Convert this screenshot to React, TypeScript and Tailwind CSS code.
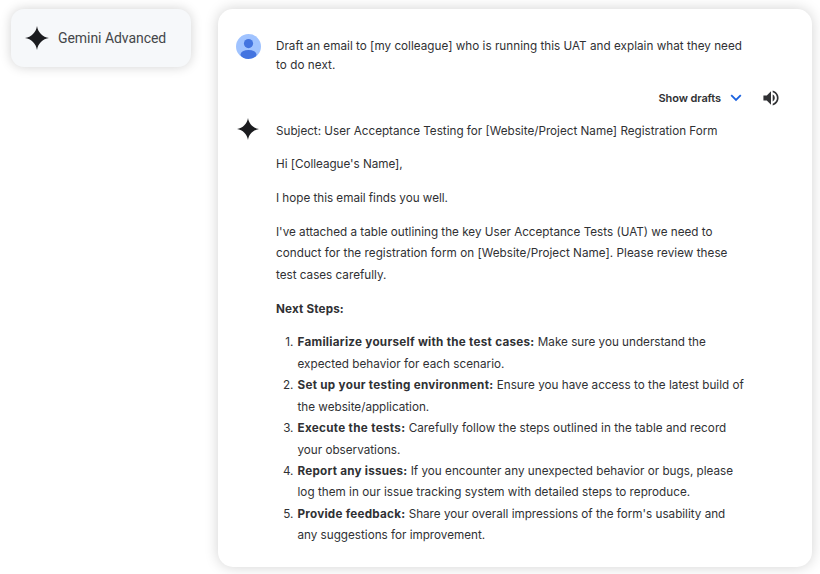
import type { ReactNode } from "react";

function Sparkle({ className }: { className: string }) {
  return (
    <svg viewBox="0 0 24 24" className={className} fill="#1b1c1f" aria-hidden="true">
      <path d="M12 0C12.9 6.3 17.7 11.1 24 12C17.7 12.9 12.9 17.7 12 24C11.1 17.7 6.3 12.9 0 12C6.3 11.1 11.1 6.3 12 0Z" />
    </svg>
  );
}

function Avatar() {
  return (
    <svg viewBox="0 0 25 25" className="size-[25px]" aria-hidden="true">
      <defs>
        <clipPath id="avatar">
          <circle cx="12.5" cy="12.5" r="12.5" />
        </clipPath>
      </defs>
      <g clipPath="url(#avatar)">
        <rect width="25" height="25" fill="#a0c3ff" />
        <circle cx="12.5" cy="9.6" r="4.6" fill="#4374e0" />
        <ellipse cx="12.5" cy="20.6" rx="8" ry="4.7" fill="#4374e0" />
      </g>
    </svg>
  );
}

function Line({ children, className = "" }: { children: ReactNode; className?: string }) {
  return <span className={`block ${className}`}>{children}</span>;
}

type Step = {
  title: string;
  tracking: string;
  first: string;
  firstTracking: string;
  second: string;
  secondTracking: string;
};

const steps: Step[] = [
  {
    title: "Familiarize yourself with the test cases:",
    tracking: "tracking-[0.27px]",
    first: "Make sure you understand the",
    firstTracking: "tracking-[0px]",
    second: "expected behavior for each scenario.",
    secondTracking: "tracking-[0.03px]",
  },
  {
    title: "Set up your testing environment:",
    tracking: "tracking-[0.29px]",
    first: "Ensure you have access to the latest build of",
    firstTracking: "tracking-[0.015px]",
    second: "the website/application.",
    secondTracking: "tracking-[0px]",
  },
  {
    title: "Execute the tests:",
    tracking: "tracking-[0.31px]",
    first: "Carefully follow the steps outlined in the table and record",
    firstTracking: "tracking-[0.04px]",
    second: "your observations.",
    secondTracking: "tracking-[0px]",
  },
  {
    title: "Report any issues:",
    tracking: "tracking-[0.235px]",
    first: "If you encounter any unexpected behavior or bugs, please",
    firstTracking: "tracking-[0.01px]",
    second: "log them in our issue tracking system with detailed steps to reproduce.",
    secondTracking: "tracking-[0.03px]",
  },
  {
    title: "Provide feedback:",
    tracking: "tracking-[0.24px]",
    first: "Share your overall impressions of the form's usability and",
    firstTracking: "tracking-[-0.005px]",
    second: "any suggestions for improvement.",
    secondTracking: "tracking-[-0.005px]",
  },
];

export default function App() {
  return (
    <div className="flex h-[574px] w-[820px] items-start gap-[27px] overflow-hidden bg-white pt-2 pl-[11px] font-['Inter',sans-serif] text-[11.7px] text-[#303134]">
      <div className="mt-[0.5px] flex h-[58.5px] w-[179.5px] shrink-0 items-center gap-[9px] rounded-[13px] bg-[#f6f8fa] pl-[14px] shadow-[0_0_12px_rgba(0,0,0,0.18)]">
        <Sparkle className="size-6 shrink-0" />
        <span className="whitespace-nowrap pt-px font-['Roboto',sans-serif] text-[14px] tracking-[-0.05px] text-[#444649]">
          Gemini Advanced
        </span>
      </div>

      <main className="mt-[0.5px] flex h-[558.5px] w-[594.5px] shrink-0 flex-col rounded-[15px] bg-white pt-[25px] pl-[18.5px] shadow-[0_0_14px_rgba(0,0,0,0.18)]">
        <div className="flex gap-[15px]">
          <Avatar />
          <p className="pt-[3.5px] leading-[19px] whitespace-nowrap">
            <Line className="tracking-[0.02px]">
              Draft an email to [my colleague] who is running this UAT and explain what they need
            </Line>
            <Line className="tracking-[0.065px]">to do next.</Line>
          </p>
        </div>

        <div className="mt-[13px] flex h-[20px] items-center justify-end pr-[33.5px]">
          <span className="text-[11px] font-semibold whitespace-nowrap tracking-[-0.1px]">Show drafts</span>
          <svg viewBox="0 0 12 8" className="ml-[8.5px] h-2 w-3" fill="none" stroke="#1b62e0" strokeWidth="1.8" aria-hidden="true">
            <path d="M1.2 1.2L6 6L10.8 1.2" />
          </svg>
          <svg viewBox="2.5 2.5 19 19" className="ml-[21px] size-4" fill="#303134" aria-hidden="true">
            <path d="M3 9v6h4l5 5V4L7 9H3zm13.5 3c0-1.77-1.02-3.29-2.5-4.03v8.05c1.48-.73 2.5-2.25 2.5-4.02zM14 3.23v2.06c2.89.86 5 3.54 5 6.71s-2.11 5.85-5 6.71v2.06c4.01-.91 7-4.49 7-8.77s-2.99-7.86-7-8.77z" />
          </svg>
        </div>

        <div className="mt-[9.5px] flex gap-[16.6px] pl-[1.4px]">
          <Sparkle className="size-[22px] shrink-0" />
          <div className="flex flex-col gap-[12.3px] pt-[3.1px] leading-[21.45px] whitespace-nowrap">
            <p>Subject: User Acceptance Testing for [Website/Project Name] Registration Form</p>
            <p className="tracking-[-0.03px]">Hi [Colleague's Name],</p>
            <p className="tracking-[-0.02px]">I hope this email finds you well.</p>
            <p>
              <Line>I've attached a table outlining the key User Acceptance Tests (UAT) we need to</Line>
              <Line className="tracking-[0.037px]">
                conduct for the registration form on [Website/Project Name]. Please review these
              </Line>
              <Line className="tracking-[0px]">test cases carefully.</Line>
            </p>
            <p className="font-bold tracking-[0.155px]">Next Steps:</p>
            <ol>
              {steps.map((step, i) => (
                <li key={step.title} className="flex">
                  <span className="w-[21.5px] pr-[4px] text-right">{i + 1}.</span>
                  <div>
                    <Line>
                      <strong className={step.tracking}>{step.title}</strong>{" "}
                      <span className={step.firstTracking}>{step.first}</span>
                    </Line>
                    <Line className={step.secondTracking}>{step.second}</Line>
                  </div>
                </li>
              ))}
            </ol>
          </div>
        </div>
      </main>
    </div>
  );
}
